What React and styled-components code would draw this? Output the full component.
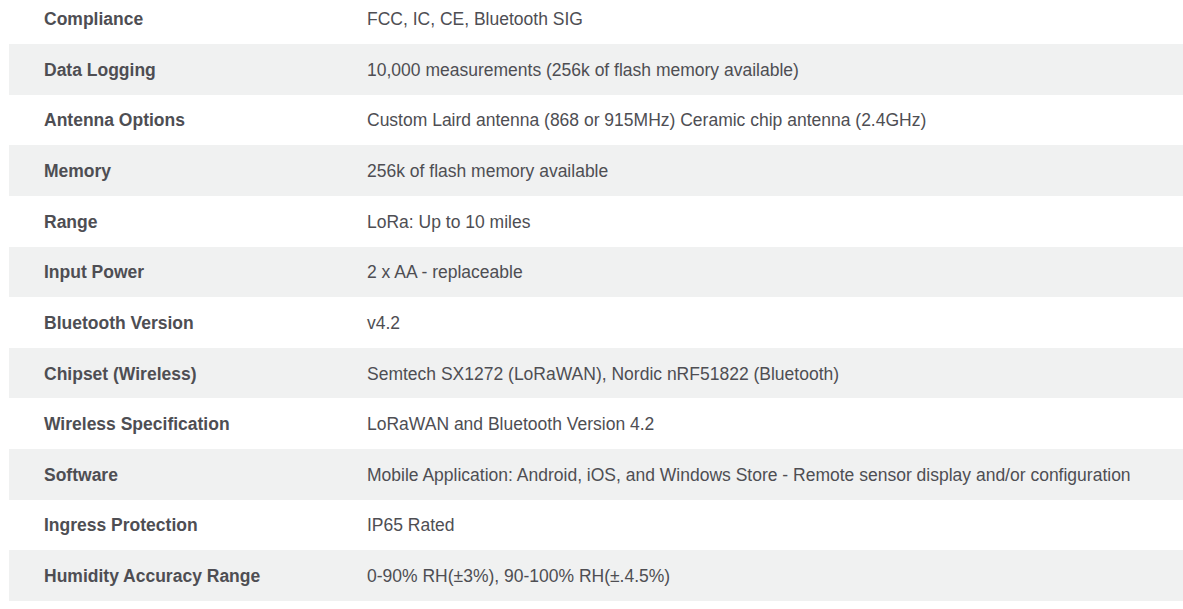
import React from 'react'
import styled, { createGlobalStyle } from 'styled-components'

const specs = [
  ['Compliance', 'FCC, IC, CE, Bluetooth SIG'],
  ['Data Logging', '10,000 measurements (256k of flash memory available)'],
  ['Antenna Options', 'Custom Laird antenna (868 or 915MHz) Ceramic chip antenna (2.4GHz)'],
  ['Memory', '256k of flash memory available'],
  ['Range', 'LoRa: Up to 10 miles'],
  ['Input Power', '2 x AA - replaceable'],
  ['Bluetooth Version', 'v4.2'],
  ['Chipset (Wireless)', 'Semtech SX1272 (LoRaWAN), Nordic nRF51822 (Bluetooth)'],
  ['Wireless Specification', 'LoRaWAN and Bluetooth Version 4.2'],
  ['Software', 'Mobile Application: Android, iOS, and Windows Store - Remote sensor display and/or configuration'],
  ['Ingress Protection', 'IP65 Rated'],
  ['Humidity Accuracy Range', '0-90% RH(±3%), 90-100% RH(±.4.5%)']
]

export default function App() {
  return (
    <>
      <GlobalStyle />
      <SpecTable>
        {specs.map(([label, value], i) => (
          <Row key={label} striped={i % 2 === 1}>
            <Label>{label}</Label>
            <Value>{value}</Value>
          </Row>
        ))}
      </SpecTable>
    </>
  )
}

// STYLES
const GlobalStyle = createGlobalStyle`
  html, body {
    margin: 0;
    padding: 0;
    background: #fff;
    overflow: hidden;
  }
  body {
    font-family: "Liberation Sans", Arial, sans-serif;
  }
`

const SpecTable = styled.div`
  margin: -6.64px 0 0 9px;
  display: flex;
  flex-direction: column;
`

const Row = styled.div.withConfig({ shouldForwardProp: p => p !== 'striped' })`
  height: 50.64px;
  box-sizing: border-box;
  padding-top: 2px;
  display: grid;
  grid-template-columns: 358px 1fr;
  align-items: center;
  background: ${p => (p.striped ? '#f0f1f1' : '#fff')};
`

const Label = styled.div`
  padding-left: 35px;
  font-size: 17.5px;
  font-weight: 700;
  color: #4e4e53;
`

const Value = styled.div`
  font-size: 17.5px;
  color: #4e4e53;
`
